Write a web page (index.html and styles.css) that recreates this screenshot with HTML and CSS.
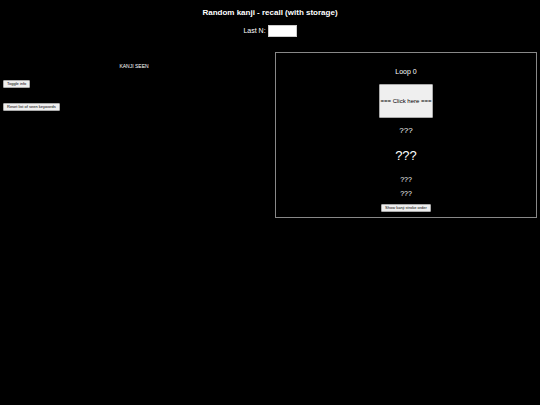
FILE: index.html
```
<!DOCTYPE html>
<html lang="en">
  <head>
    <meta charset="utf-8" />
    <meta name="viewport" content="width=device-width,initial-scale=1.0" />
    <title>Random kanji - recall</title>
    <link rel="stylesheet" href="styles.css">
  </head>
  <body>
    <h1>Random kanji - recall (with storage)</h1>
    <div id="settings">
      <label for="last-n">Last N:</label>
      <input id="last-n" type="text" autocomplete="off" />
    </div>
    <div id="main">
      <div id="seen">
        <p class="seen-title">KANJI SEEN</p>
        <button id="toggle-info" class="small-btn">Toggle info</button>
        <button id="reset" class="small-btn">Reset list of seen keywords</button>
      </div>
      <div id="card">
        <p class="loop">Loop 0</p>
        <button id="next">=== Click here ===</button>
        <p class="keyword">???</p>
        <p class="kanji">???</p>
        <p class="reading">???</p>
        <p class="reading">???</p>
        <button id="stroke" class="small-btn">Show kanji stroke order</button>
      </div>
    </div>
  </body>
</html>
```

FILE: styles.css
```
body {
  margin: 0;
  padding: 8px 3px;
  background: #000;
  color: #fff;
  font-family: "Liberation Sans", Arial, sans-serif;
  font-size: 7px;
  line-height: 8px;
}

h1 {
  margin: 0 0 7px;
  font-size: 8px;
  line-height: 10px;
  text-align: center;
}

p {
  margin: 0;
}

button {
  background: #efefef;
  color: #000;
  border: 1px solid #aaa;
  border-radius: 1px;
  font-family: inherit;
}

#settings {
  display: flex;
  justify-content: center;
  align-items: center;
  gap: 2px;
  margin-bottom: 15px;
}
#last-n {
  box-sizing: border-box;
  width: 29px;
  height: 12px;
  padding: 0 1px;
  border: 1px solid #ccc;
  background: #fff;
  font-family: inherit;
  font-size: 7px;
}

#main {
  display: grid;
  grid-template-columns: 1fr 1fr;
  gap: 10px;
}
#seen {
  display: flex;
  flex-direction: column;
  align-items: flex-start;
  padding-top: 10px;
}
.seen-title {
  align-self: center;
  font-size: 5px;
}
#toggle-info {
  margin: 10px 0 15px;
}
.small-btn {
  padding: 0 3px;
  font-size: 4px;
  line-height: 6px;
}

#card {
  display: flex;
  flex-direction: column;
  align-items: center;
  border: 1px solid #888;
  padding: 15px 0 5px;
}
#next {
  margin: 8px 0;
  padding: 13px 0;
  font-size: 6px;
  line-height: 6px;
}
.keyword {
  font-size: 8px;
  line-height: 10px;
}
.kanji {
  margin: 12px 0;
  font-size: 13px;
  line-height: 16px;
}
.reading {
  margin-bottom: 6px;
}
```
